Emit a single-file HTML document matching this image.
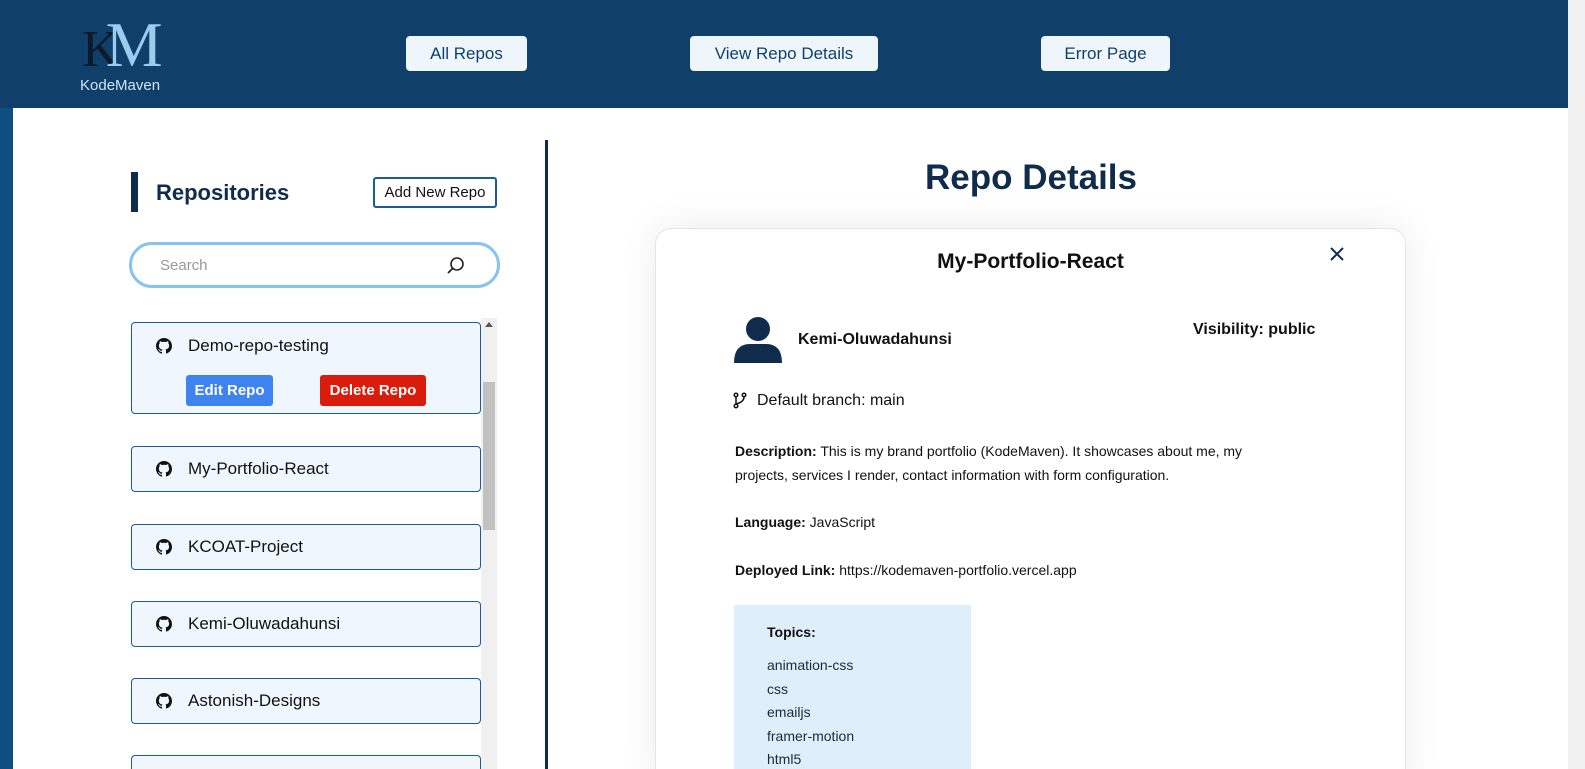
<!DOCTYPE html>
<html style="overflow:hidden;width:1585px;height:769px"><head><style>
*{box-sizing:border-box;margin:0;padding:0}
html,body{overflow:hidden}
body{width:1585px;height:769px;overflow:hidden;background:#fff;font-family:"Liberation Sans",sans-serif;position:relative;color:#111}
.a{position:absolute}
.hb{position:absolute;top:36px;height:35px;background:#eef5fb;border-radius:4px;color:#10406a;font-size:17px;display:flex;align-items:center;justify-content:center}
.repo{position:absolute;left:131px;width:350px;height:46px;background:#eff6fd;border:1px solid #1b5c96;border-radius:4px;font-size:17px;display:flex;align-items:center;padding-left:56px;color:#111}
.gh{position:absolute;left:24px;top:50%;margin-top:-8px;width:16px;height:16px}
p.t{font-size:14px;line-height:24px;color:#111}
</style></head><body>
<div class="a" style="left:0;top:0;width:1568px;height:108px;background:#10406a"></div>
<div class="a" style="left:1568px;top:0;width:17px;height:769px;background:#f0f0f0"></div>
<div class="a" style="left:0;top:108px;width:13px;height:661px;background:#0d4f80"></div>
<div class="a" style="left:82px;top:8px;font-family:'Liberation Serif',serif;font-size:52px;color:#0c1a2c;letter-spacing:-14px">K<span style="color:#9ccbf0;font-size:64px">M</span></div>
<div class="a" style="left:80px;top:77px;color:#cfe4f7;font-size:15px">KodeMaven</div>
<div class="hb" style="left:406px;width:121px">All Repos</div>
<div class="hb" style="left:690px;width:188px">View Repo Details</div>
<div class="hb" style="left:1041px;width:129px">Error Page</div>

<div class="a" style="left:545px;top:140px;width:3px;height:629px;background:#0f2c4d"></div>
<div class="a" style="left:131px;top:172px;width:7px;height:40px;background:#0f2c4d"></div>
<div class="a" style="left:156px;top:180px;font-size:22px;font-weight:bold;color:#0f2c4d">Repositories</div>
<div class="a" style="left:373px;top:177px;width:124px;height:31px;border:2px solid #1b5c96;border-radius:3px;font-size:15px;display:flex;align-items:center;justify-content:center">Add New Repo</div>
<div class="a" style="left:129px;top:242px;width:371px;height:46px;border:3px solid #86c3f0;border-radius:23px"></div>
<div class="a" style="left:160px;top:257px;font-size:15px;color:#999">Search</div>
<svg class="a" style="left:446px;top:256px" width="20" height="20" viewBox="0 0 20 20"><circle cx="11" cy="8" r="6" fill="none" stroke="#222" stroke-width="1.6"/><path d="M7 12 L2 17" stroke="#222" stroke-width="1.8"/></svg>

<div class="a" style="left:481px;top:318px;width:16px;height:451px;background:#f0f0f0"></div>
<div class="a" style="left:483px;top:382px;width:12px;height:148px;background:#c1c1c1"></div>
<div class="a" style="left:485px;top:322px;width:0;height:0;border-left:4px solid transparent;border-right:4px solid transparent;border-bottom:5px solid #555"></div>

<div class="repo" style="top:322px;height:92px;align-items:flex-start;padding-top:13px">
<svg class="gh" style="top:23px" viewBox="0 0 16 16"><use href="#g"/></svg>Demo-repo-testing</div>
<div class="a" style="left:186px;top:375px;width:87px;height:31px;background:#3f83f0;border-radius:3px;color:#fff;font-weight:bold;font-size:15px;display:flex;align-items:center;justify-content:center">Edit Repo</div>
<div class="a" style="left:320px;top:375px;width:106px;height:31px;background:#d91c0b;border-radius:3px;color:#fff;font-weight:bold;font-size:15px;display:flex;align-items:center;justify-content:center">Delete Repo</div>

<div class="repo" style="top:446px"><svg class="gh" viewBox="0 0 16 16"><use href="#g"/></svg>My-Portfolio-React</div>
<div class="repo" style="top:524px"><svg class="gh" viewBox="0 0 16 16"><use href="#g"/></svg>KCOAT-Project</div>
<div class="repo" style="top:601px"><svg class="gh" viewBox="0 0 16 16"><use href="#g"/></svg>Kemi-Oluwadahunsi</div>
<div class="repo" style="top:678px"><svg class="gh" viewBox="0 0 16 16"><use href="#g"/></svg>Astonish-Designs</div>
<div class="repo" style="top:755px;height:14px;border-bottom:none;border-radius:4px 4px 0 0"></div>
<svg width="0" height="0" style="position:absolute"><defs><path id="g" fill="#111" d="M8 0C3.6 0 0 3.6 0 8c0 3.5 2.3 6.5 5.5 7.6.4.1.5-.2.5-.4v-1.4c-2.2.5-2.7-1-2.7-1-.4-.9-.9-1.2-.9-1.2-.7-.5.1-.5.1-.5.8.1 1.2.8 1.2.8.7 1.2 1.9.9 2.3.7.1-.5.3-.9.5-1.100-1.8-.2-3.6-.9-3.6-4 0-.9.3-1.6.8-2.1-.1-.2-.4-1 .1-2.1 0 0 .7-.2 2.2.8.6-.2 1.3-.3 2-.3s1.4.1 2 .3c1.5-1 2.2-.8 2.2-.8.4 1.1.2 1.9.1 2.1.5.6.8 1.3.8 2.1 0 3.1-1.9 3.7-3.6 3.9.3.3.5.8.5 1.5v2.2c0 .2.1.5.6.4C13.7 14.5 16 11.5 16 8c0-4.4-3.6-8-8-8z"/></defs></svg>

<div class="a" style="left:548px;width:966px;top:158px;text-align:center;font-size:35px;font-weight:bold;color:#0f2c4d">Repo Details</div>
<div class="a" style="left:655px;top:228px;width:751px;height:560px;border:1px solid #e4e4e4;border-radius:16px;box-shadow:0 0 40px rgba(0,0,0,0.08);background:#fff"></div>
<div class="a" style="left:655px;width:751px;top:250px;text-align:center;font-size:21px;font-weight:bold">My-Portfolio-React</div>
<svg class="a" style="left:1329px;top:246px" width="16" height="16" viewBox="0 0 16 16"><path d="M2 2L14 14M14 2L2 14" stroke="#0f2c4d" stroke-width="2"/></svg>
<svg class="a" style="left:734px;top:316px" width="48" height="47" viewBox="0 0 48 47"><circle cx="24" cy="13" r="12" fill="#0f2c4d"/><path d="M0 47 Q0 28 16 28 L32 28 Q48 28 48 47 Z" fill="#0f2c4d"/></svg>
<div class="a" style="left:798px;top:331px;font-size:16px;font-weight:bold">Kemi-Oluwadahunsi</div>
<div class="a" style="left:1193px;top:321px;font-size:16px;font-weight:bold">Visibility: public</div>
<svg class="a" style="left:733px;top:392px" width="14" height="17" viewBox="0 0 14 17"><g fill="none" stroke="#111" stroke-width="1.5"><circle cx="3" cy="3" r="1.8"/><circle cx="11" cy="3" r="1.8"/><circle cx="3" cy="14" r="1.8"/><path d="M3 5V12M11 5Q11 10 3 12"/></g></svg>
<div class="a" style="left:757px;top:392px;font-size:16px">Default branch: main</div>
<div class="a" style="left:735px;top:439px;width:555px"><p class="t"><b>Description:</b> This is my brand portfolio (KodeMaven). It showcases about me, my projects, services I render, contact information with form configuration.</p></div>
<div class="a" style="left:735px;top:510px"><p class="t"><b>Language:</b> JavaScript</p></div>
<div class="a" style="left:735px;top:558px"><p class="t"><b>Deployed Link:</b> https://kodemaven-portfolio.vercel.app</p></div>
<div class="a" style="left:734px;top:605px;width:237px;height:164px;background:#deeefb"></div>
<div class="a" style="left:767px;top:624px;font-size:14px;font-weight:bold;color:#111">Topics:</div>
<div class="a" style="left:767px;top:654px;font-size:14px;line-height:23.5px;color:#1a2a3a">animation-css<br>css<br>emailjs<br>framer-motion<br>html5</div>
</body></html>
